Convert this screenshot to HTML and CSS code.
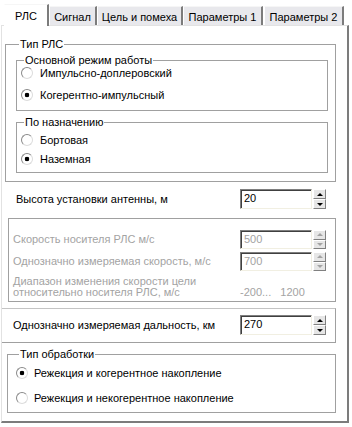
FILE: index.html
```html
<!DOCTYPE html>
<html>
<head>
	<meta charset="utf-8">
	<title>Параметры РЛС</title>
	<link rel="stylesheet" href="styles.css">
</head>
<body>

<div class="tabs">
	<div class="tab active tab-rls">РЛС</div>
	<div class="tab tab-signal">Сигнал</div>
	<div class="tab tab-target">Цель и помеха</div>
	<div class="tab tab-param">Параметры 1</div>
	<div class="tab tab-param">Параметры 2</div>
</div>

<div class="sheet">

	<fieldset class="group group-type">
		<legend>Тип РЛС</legend>

		<fieldset class="group group-mode">
			<legend>Основной режим работы</legend>
			<div class="option"><span class="radio"></span>Импульсно-доплеровский</div>
			<div class="option"><span class="radio checked"></span>Когерентно-импульсный</div>
		</fieldset>

		<fieldset class="group group-purpose">
			<legend>По назначению</legend>
			<div class="option"><span class="radio"></span>Бортовая</div>
			<div class="option"><span class="radio checked"></span>Наземная</div>
		</fieldset>
	</fieldset>

	<div class="row row-height">
		<span class="label">Высота установки антенны, м</span>
		<span class="field">20</span>
		<span class="spin"><span class="spin-btn up"></span><span class="spin-btn down"></span></span>
	</div>

	<fieldset class="group group-speed disabled">
		<div class="row row-small">
			<span class="label">Скорость носителя РЛС м/с</span>
			<span class="field">500</span>
			<span class="spin"><span class="spin-btn up"></span><span class="spin-btn down"></span></span>
		</div>
		<div class="row row-small">
			<span class="label">Однозначно измеряемая скорость, м/с</span>
			<span class="field">700</span>
			<span class="spin"><span class="spin-btn up"></span><span class="spin-btn down"></span></span>
		</div>
		<div class="row row-range">
			<span class="label">Диапазон изменения скорости цели<br>относительно носителя РЛС, м/с</span>
			<span class="range">-200...   1200</span>
		</div>
	</fieldset>

	<div class="row panel-range">
		<span class="label">Однозначно измеряемая дальность, км</span>
		<span class="field">270</span>
		<span class="spin"><span class="spin-btn up"></span><span class="spin-btn down"></span></span>
	</div>

	<fieldset class="group group-process">
		<legend>Тип обработки</legend>
		<div class="option"><span class="radio checked"></span>Режекция и когерентное накопление</div>
		<div class="option"><span class="radio"></span>Режекция и некогерентное накопление</div>
	</fieldset>

</div>

</body>
</html>
```

FILE: styles.css
```css
* {
	box-sizing: border-box;
}
body {
	margin: 0;
	background: #fff;
	color: #000;
	font: 11px/13px "Liberation Sans", Arial, sans-serif;
}

/* tabs */
.tabs {
	display: flex;
	align-items: flex-end;
	height: 25px;
	padding-left: 4px;
}
.tab {
	height: 19px;
	padding-top: 4px;
	text-align: center;
	white-space: nowrap;
	background: #e8e8ec;
	border-top: 1px solid #f6f6f6;
	border-left: 1px solid #fff;
	border-right: 2px solid #7c7c7c;
}
.tab.active {
	height: 22px;
	margin-bottom: -1px;
	padding-top: 5px;
	background: #fff;
	position: relative;
	z-index: 1;
}
.tab-rls {
	width: 45px;
}
.tab-signal {
	width: 48px;
}
.tab-target {
	width: 86px;
}
.tab-param {
	width: 80px;
	margin-right: 1px;
}

/* sheet */
.sheet {
	width: 348px;
	height: 398px;
	margin-left: 1px;
	border-top: 1px solid #e2e2e2;
	border-left: 1px solid #e2e2e2;
	border-right: 2px solid #7c7c7c;
	border-bottom: 2px solid #7c7c7c;
}

/* group boxes */
.group {
	margin: 0;
	padding: 0;
	min-width: 0;
	border: 1px solid #a0a0a0;
}
.group legend {
	margin-left: 3px;
	padding: 0 1px;
	line-height: 12px;
}
.group-type {
	margin: 12px 11px 0 3px;
	padding: 4px 7px 8px 10px;
}
.group-mode {
	padding: 0 4px 8px 4px;
}
.group-mode .option + .option {
	margin-top: 8px;
}
.group-purpose {
	margin-top: 5px;
	padding: 5px 4px 6px 4px;
}
.group-purpose .option + .option {
	margin-top: 5px;
}
.group-speed {
	margin: 9px 11px 0 6px;
	padding: 11px 9px 3px 4px;
}
.group-process {
	margin: 5px 11px 0 5px;
	padding: 6px 4px 7px 8px;
}
.group-process .option + .option {
	margin-top: 11px;
}
.group-process .radio {
	margin-right: 6px;
}

/* radios */
.option {
	display: flex;
	align-items: center;
	height: 14px;
	white-space: nowrap;
}
.radio {
	flex: none;
	width: 12px;
	height: 12px;
	margin-right: 7px;
	border-radius: 50%;
	border: 1px solid;
	border-color: #8a8a8a #dcdcdc #dcdcdc #8a8a8a;
	background: #fff;
}
.radio.checked {
	background: radial-gradient(circle, #000 0, #000 2px, #fff 2.6px);
}

/* value rows */
.row {
	display: flex;
	align-items: center;
}
.row .label {
	flex: 1;
	white-space: nowrap;
}
.row-height {
	height: 20px;
	margin-top: 7px;
	padding: 0 21px 0 14px;
}
.row-small {
	height: 19px;
}
.row-small + .row-small {
	margin-top: 3px;
}
.row-range {
	margin-top: 5px;
	align-items: flex-end;
}
.row-range .label {
	line-height: 11px;
}
.range {
	width: 86px;
	white-space: pre;
	line-height: 11px;
}
.panel-range {
	height: 35px;
	margin: 6px 11px 0 0;
	padding: 6px 9px 7px 11px;
	border-top: 1px solid #c4c4c4;
	border-right: 1px solid #a0a0a0;
	border-bottom: 1px solid #a0a0a0;
}

.field {
	flex: none;
	width: 72px;
	height: 100%;
	padding: 1px 0 0 3px;
	line-height: 14px;
	background: #fff;
	border: 1px solid;
	border-color: #7f7f7f #f1efe2 #f1efe2 #7f7f7f;
	box-shadow: inset 1px 1px 0 #404040;
}
.spin {
	flex: none;
	display: flex;
	flex-direction: column;
	width: 13px;
	height: 100%;
	margin-left: 1px;
}
.spin-btn {
	flex: 1;
	display: flex;
	align-items: center;
	justify-content: center;
	background: #e6e6e6;
	border: 1px solid;
	border-color: #fff #808080 #808080 #fff;
}
.spin-btn::before {
	content: "";
	border-left: 3px solid transparent;
	border-right: 3px solid transparent;
}
.spin-btn.up::before {
	border-bottom: 3px solid #000;
}
.spin-btn.down::before {
	border-top: 3px solid #000;
}

/* disabled block */
.disabled {
	color: #a3a3a3;
}
.disabled .spin-btn.up::before {
	border-bottom-color: #a3a3a3;
}
.disabled .spin-btn.down::before {
	border-top-color: #a3a3a3;
}
```
